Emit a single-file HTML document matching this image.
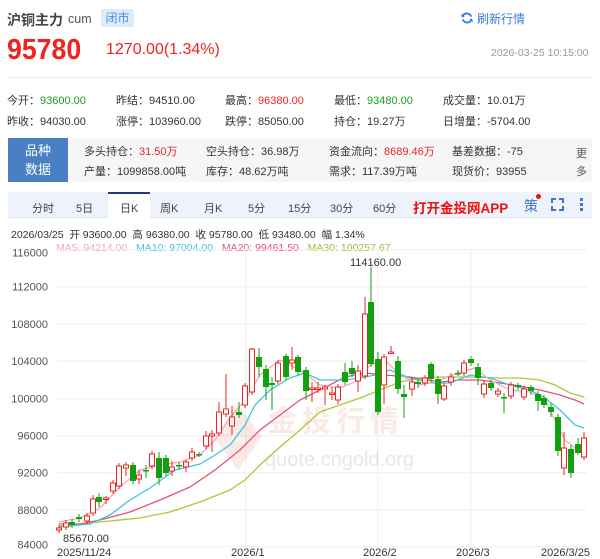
<!DOCTYPE html>
<html><head><meta charset="utf-8"><style>
*{margin:0;padding:0;box-sizing:border-box}
body{width:600px;height:559px;background:#fff;font-family:"Liberation Sans","Noto Sans CJK SC",sans-serif;color:#333;position:relative;overflow:hidden}
.a{position:absolute;white-space:nowrap}
.r{color:#f0231f}.g{color:#1aa01a}
.s{font-size:11px}
</style></head><body>
<div class="a" style="left:7px;top:10px;font-size:14px;color:#444;font-weight:bold">沪铜主力</div>
<div class="a" style="left:68px;top:12px;font-size:12.5px;color:#555">cum</div>
<div class="a" style="left:101px;top:9px;width:33px;height:18px;background:#dcecfb;color:#4a8fd8;font-size:12px;line-height:18px;text-align:center">闭市</div>
<svg class="a" style="left:461px;top:12px" width="12" height="12" viewBox="0 0 13 13"><path d="M11 5A5 5 0 0 0 2 4M2 8A5 5 0 0 0 11 9" fill="none" stroke="#2d7be0" stroke-width="2"/><path d="M0 2L4 5L1 6Z M13 11L9 8L12 7Z" fill="#2d7be0"/></svg>
<div class="a" style="left:477px;top:10px;font-size:12px;color:#3b7dd8">刷新行情</div>
<div class="a r" style="left:7px;top:34px;font-size:29px;font-weight:bold;transform:scaleX(0.92);transform-origin:0 0">95780</div>
<div class="a r" style="left:106px;top:41px;font-size:16px">1270.00(1.34%)</div>
<div class="a" style="left:491px;top:47px;font-size:10.5px;color:#999">2026-03-25 10:15:00</div>
<div class="a" style="left:8px;top:77px;width:584px;height:1px;background:#e8e8e8"></div>
<div class="a s" style="left:7px;top:92px">今开：<span class="g">93600.00</span></div>
<div class="a s" style="left:116px;top:92px">昨结：94510.00</div>
<div class="a s" style="left:225px;top:92px">最高：<span class="r">96380.00</span></div>
<div class="a s" style="left:334px;top:92px">最低：<span class="g">93480.00</span></div>
<div class="a s" style="left:443px;top:92px">成交量：10.01万</div>
<div class="a s" style="left:7px;top:113px">昨收：94030.00</div>
<div class="a s" style="left:116px;top:113px">涨停：103960.00</div>
<div class="a s" style="left:225px;top:113px">跌停：85050.00</div>
<div class="a s" style="left:334px;top:113px">持仓：19.27万</div>
<div class="a s" style="left:443px;top:113px">日增量：-5704.00</div>
<div class="a" style="left:8px;top:138px;width:584px;height:44px;background:#f5f6f8"></div>
<div class="a" style="left:8px;top:138px;width:60px;height:44px;background:#4a7fc4;color:#fff;font-size:13px;line-height:19px;text-align:center;padding-top:3px;white-space:normal">品种<br>数据</div>
<div class="a s" style="left:84px;top:143px">多头持仓：<span class="r">31.50万</span></div>
<div class="a s" style="left:206px;top:143px">空头持仓：36.98万</div>
<div class="a s" style="left:329px;top:143px">资金流向：<span class="r">8689.46万</span></div>
<div class="a s" style="left:452px;top:143px">基差数据：-75</div>
<div class="a s" style="left:84px;top:163px">产量：1099858.00吨</div>
<div class="a s" style="left:206px;top:163px">库存：48.62万吨</div>
<div class="a s" style="left:329px;top:163px">需求：117.39万吨</div>
<div class="a s" style="left:452px;top:163px">现货价：93955</div>
<div class="a s" style="left:576px;top:145px;color:#555;line-height:18px;white-space:normal;width:12px">更多</div>
<div class="a" style="left:8px;top:192px;width:584px;height:26px;background:#eef3fb;border-bottom:1px solid #dde5f0"></div>
<div class="a" style="left:108px;top:192px;width:42px;height:27px;background:#fff;border-top:2px solid #1e3a78"></div>
<div class="a" style="left:0;top:200px;font-size:11px;color:#444;width:600px;height:14px">
<span class="a" style="left:32px">分时</span><span class="a" style="left:76px">5日</span><span class="a" style="left:120px">日K</span><span class="a" style="left:160px">周K</span><span class="a" style="left:204px">月K</span><span class="a" style="left:248px">5分</span><span class="a" style="left:288px">15分</span><span class="a" style="left:330px">30分</span><span class="a" style="left:373px">60分</span></div>
<div class="a" style="left:413px;top:197px;font-size:13.5px;font-weight:bold;color:#f01010">打开金投网APP</div>
<div class="a" style="left:524px;top:196px;font-size:14px;color:#3a78c8">策</div>
<div class="a" style="left:536px;top:194px;width:5px;height:5px;border-radius:50%;background:#f01010"></div>
<svg class="a" style="left:551px;top:198px" width="13" height="13"><path d="M1 5V1H5M8 1H12V5M12 8V12H8M5 12H1V8" fill="none" stroke="#3a78c8" stroke-width="2"/></svg>
<div class="a" style="left:580px;top:198px;width:3px;height:3px;background:#3a78c8;box-shadow:0 5px 0 #3a78c8,0 10px 0 #3a78c8"></div>
<div class="a" style="left:11px;top:227px;font-size:10.5px;color:#333">2026/03/25&nbsp; 开 93600.00&nbsp; 高 96380.00&nbsp; 收 95780.00&nbsp; 低 93480.00&nbsp; 幅 1.34%</div>
<div class="a" style="left:56px;top:242px;font-size:10.5px"><span style="color:#f6a6bf">MA5: 94214.00</span>&nbsp;&nbsp; <span style="color:#3ec6e0">MA10: 97004.00</span>&nbsp;&nbsp; <span style="color:#e8507a">MA20: 99461.50</span>&nbsp;&nbsp; <span style="color:#98c032">MA30: 100257.67</span></div>
<svg id="c" class="a" style="left:0;top:0" width="600" height="559"></svg>
<script>
var s='';
var gy=[249.6,286.7,324,361,398.7,435.7,472.7,510,546.7],lab=['116000','112000','108000','104000','100000','96000','92000','88000','84000'];
gy.forEach(function(y,i){s+='<line x1="57" x2="587" y1="'+y+'" y2="'+y+'" stroke="#eeeeee"/>';s+='<text x="48" y="'+(y+(i==0?7:i==8?2:4))+'" font-size="11" fill="#555" text-anchor="end">'+lab[i]+'</text>';});
[245.7,377.7,471].forEach(function(x){s+='<line x1="'+x+'" x2="'+x+'" y1="249" y2="547" stroke="#eeeeee"/>'});
s+='<g opacity="0.14"><path d="M238 405L262 437L238 470L214 437Z" fill="#e06a50"/><text x="238" y="442" font-size="12" fill="#fff" text-anchor="middle">Au</text></g>';
s+='<text x="268" y="431" font-size="29" font-weight="bold" fill="#e06a50" opacity="0.14" letter-spacing="5">金投行情</text>';
s+='<text x="265" y="466" font-size="20" fill="#bbb" opacity="0.35">quote.cngold.org</text>';
function pl(p,c){s+='<polyline fill="none" stroke="'+c+'" stroke-width="1.3" points="'+p+'"/>';}
pl('59,526 100,522 140,518 170,512 200,502 230,490 245,480 260,465 280,447 300,430 320,412 340,405 360,398 380,390 400,382 420,378 440,377 470,377 500,378 520,378 540,380 555,385 570,393 584,397','#a9c93a');
pl('59,524 80,524 100,520 130,512 160,500 190,487 215,470 240,450 260,430 280,415 300,400 320,390 345,377 365,373 385,375 410,377 440,382 460,380 480,380 500,383 520,386 540,390 560,395 575,400 584,404','#e8507a');
pl('59,527 90,524 110,515 130,500 150,488 175,470 200,464 215,455 230,445 245,425 255,405 270,390 290,378 305,373 320,380 345,380 360,378 375,375 390,370 410,378 430,383 450,383 470,375 490,378 510,385 530,390 545,398 560,410 575,425 584,428','#3ec6e0');
pl('59,522 80,518 100,508 120,487 140,470 160,465 180,462 200,455 215,440 230,418 245,400 260,375 280,360 300,370 320,385 340,388 360,380 370,365 385,360 400,375 420,385 440,380 460,372 475,368 490,380 510,390 530,392 545,400 555,420 565,440 575,448 584,450','#f6a6bf');
var C=[[59,528,530,'r'],[66,523,527,'r'],[72,522,525,'g'],[79,517,519,'g'],[87,516,521,'r'],[93,499,513,'r',495],[99,497,502,'g',493,507],[106,498,498,'r',496,504],[113,483,491,'r'],[119,466,486,'r'],[126,465,468,'r',462,476],[133,465,481,'g'],[139,475,479,'r',470,484],[146,470,470,'g',465,478],[152,454,466,'r',451],[159,458,478,'g',452,485],[166,458,473,'g'],[172,467,471,'r',461,476],[179,465,465,'g',462,470],[186,462,467,'r',460,472],[192,452,458,'r',448],[199,454,454,'g',452,457],[206,436,446,'r',431],[212,434,436,'r',430,452],[219,412,433,'r',402],[226,409,414,'r',374,417],[232,417,426,'r',406,435],[239,412,415,'g',402,418],[245,386,405,'r'],[252,349,392,'r',348],[259,357,367,'g',348,377],[266,369,387,'g',365,400],[272,383,385,'g',377,410],[278,363,381,'r',360],[286,356,377,'g',354],[292,360,363,'r',347,370],[298,357,372,'g',355],[306,370,391,'g',367,400],[312,388,388,'r',382,402],[318,388,388,'r',382,393],[325,387,389,'r',385,405],[332,393,393,'r',387,400],[338,387,400,'r',384,404],[345,372,382,'g',363],[352,368,374,'g',361],[358,371,381,'r',365,392],[365,314,376,'r',297],[371,302,364,'g',267],[378,359,412,'g',352],[384,357,385,'r',354,404],[391,352,352,'r',346,354],[398,361,389,'g',356,394],[404,394,397,'g',385,418],[412,382,389,'r',377,396],[418,382,384,'g',379,388],[425,378,383,'r',375,386],[431,364,379,'g',362],[438,379,394,'g',376,404],[444,386,399,'r',383,401],[451,377,382,'r',373,386],[458,373,373,'g',370,376],[464,363,373,'r',360],[471,359,363,'g',356,366],[478,367,378,'g',363,385],[484,384,394,'r',380,398],[491,383,388,'g',380,391],[498,391,394,'r',388,397],[504,397,397,'g',393,413],[511,385,396,'r',382,399],[518,385,387,'g',383,390],[524,389,397,'r',386,400],[531,387,391,'g',385,395],[538,394,401,'g',391,411],[544,398,405,'g',395,408],[551,407,412,'g',403,417],[558,417,451,'g',414,456],[564,448,468,'r',432,475],[571,449,473,'g',445,478],[578,444,453,'g',438,455],[584,438,457,'r',432,460]];
C.forEach(function(c){var col=c[3]=='r'?'#f0231f':'#10a010';var t=Math.min(c[1],c[2]),b=Math.max(c[1],c[2]);var wt=c[4]||t-3,wb=c[5]||b+3;
s+='<line x1="'+c[0]+'" x2="'+c[0]+'" y1="'+wt+'" y2="'+wb+'" stroke="'+col+'"/>';
var h=Math.max(b-t,1.5);
if(c[3]=='r')s+='<rect x="'+(c[0]-2.5)+'" y="'+t+'" width="5" height="'+h+'" fill="#fff" stroke="'+col+'"/>';
else s+='<rect x="'+(c[0]-3)+'" y="'+t+'" width="6" height="'+h+'" fill="'+col+'"/>';});
s+='<text x="350" y="266" font-size="11" fill="#333">114160.00</text>';
s+='<text x="63" y="542" font-size="11" fill="#333">85670.00</text>';
[['2025/11/24',57],['2026/1',231],['2026/2',363],['2026/3',456],['2026/3/25',541]].forEach(function(l){s+='<text x="'+l[1]+'" y="556" font-size="11" fill="#333">'+l[0]+'</text>'});
document.getElementById('c').innerHTML=s;
</script>
</body></html>
